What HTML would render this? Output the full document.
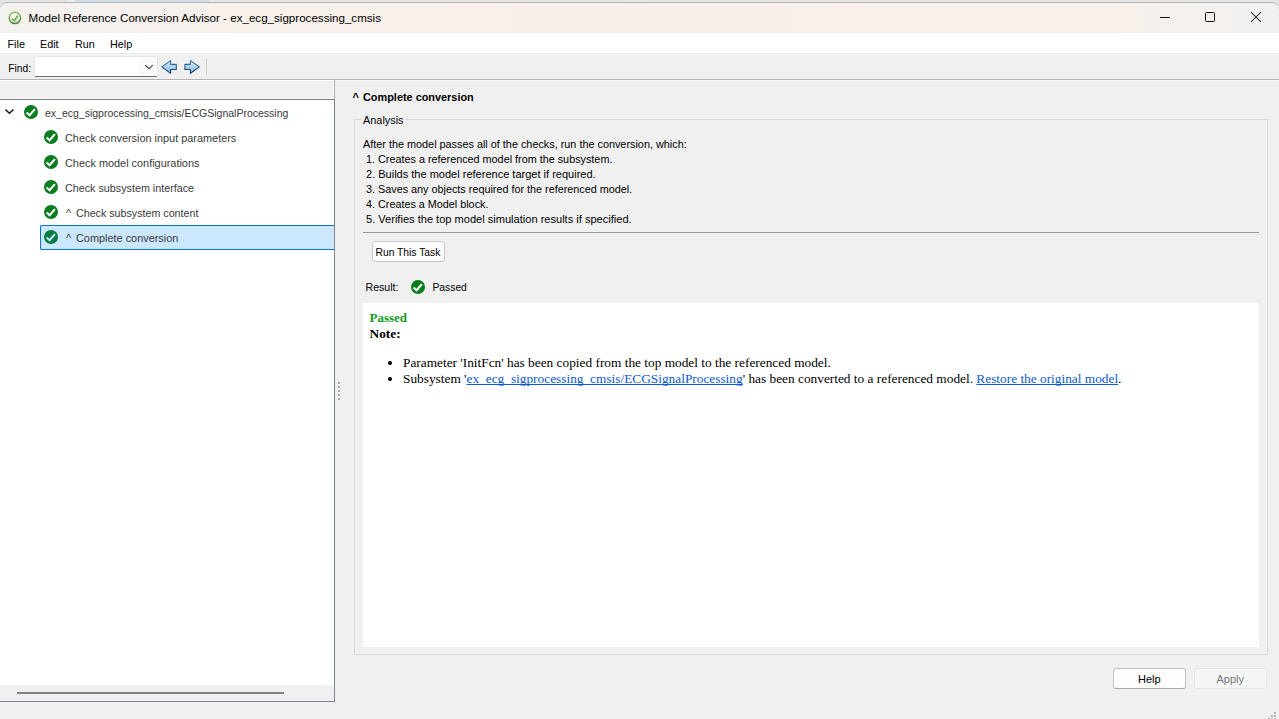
<!DOCTYPE html>
<html><head><meta charset="utf-8">
<style>
*{margin:0;padding:0;box-sizing:border-box}
html,body{width:1279px;height:719px;overflow:hidden;background:#f0f0f0;font-family:"Liberation Sans",sans-serif;color:#000}
.abs{position:absolute}
.t{position:absolute;white-space:nowrap;line-height:1}
#desk{left:0;top:0;width:1279px;height:6px;background:#e4e4e4}
#title{left:0;top:2px;width:1279px;height:31px;background:linear-gradient(90deg,#f4f2f0,#f7f0eb 18%,#f8efea 50%,#f7f0eb 88%,#f3f1ef 97%);border-top:1px solid #b4b4b4;border-radius:7px 7px 0 0}
#menu{left:0;top:33px;width:1279px;height:20px;background:#fff}
#menusep{left:0;top:53px;width:1279px;height:1px;background:#e6e6e6}
#menusep2{left:0;top:54px;width:1279px;height:1px;background:#f9f9f9}
#toolsep{left:0;top:79px;width:1279px;height:1px;background:#b2b2b2}
#tree{left:0;top:99px;width:335px;height:603px;background:#fff;border-top:1px solid #7c8491;border-right:1px solid #7c8491;border-bottom:1px solid #7c8491}
#hscroll{left:0;top:685px;width:334px;height:16px;background:#f0f0f0}
#hthumb{left:17px;top:692px;width:267px;height:2px;background:#808080}
.chk{position:absolute;width:14px;height:14px}
#sel{left:40px;top:225px;width:294px;height:25px;background:#cce8ff;border:1px solid #0a73d3;border-right:none;border-radius:2px 0 0 2px}
#grp{left:354px;top:119px;width:914px;height:536px;border:1px solid #d9d9d9}
#report{left:363px;top:303px;width:896px;height:344px;background:#fff}
.btn{position:absolute;background:#fdfdfd;border:1px solid #c8c8c8;border-radius:3px}
.serif{font-family:"Liberation Serif",serif}
a{color:#0c5bd0;text-decoration:underline;text-decoration-skip-ink:none}
.tr{font-size:10.9px;color:#3a3a3a}
.an{font-size:10.9px}
</style></head><body>
<div id="desk" class="abs"></div>
<div class="abs" style="left:67px;top:0;width:8px;height:3px;background:#ececec"></div><div class="abs" style="left:75px;top:0;width:134px;height:3px;background:#d0dce7"></div>
<div id="title" class="abs"></div>
<svg class="abs" style="left:8px;top:10.5px" width="14" height="14" viewBox="0 0 14 14">
<defs><radialGradient id="gi" cx="0.4" cy="0.35" r="0.75"><stop offset="0" stop-color="#ffffff"/><stop offset="0.6" stop-color="#e8e8ec"/><stop offset="1" stop-color="#b9b9c2"/></radialGradient>
<linearGradient id="gr" x1="0" y1="0" x2="0" y2="1"><stop offset="0" stop-color="#8cc152"/><stop offset="1" stop-color="#4f8236"/></linearGradient></defs>
<circle cx="6.9" cy="6.9" r="5.7" fill="url(#gi)" stroke="url(#gr)" stroke-width="1.4"/>
<path d="M4 7.6 L6.3 10 L9.8 4.5" fill="none" stroke="#74b347" stroke-width="1.7"/>
</svg>
<div class="t" style="left:28.5px;top:11.9px;font-size:11.6px">Model Reference Conversion Advisor - ex_ecg_sigprocessing_cmsis</div>
<div class="abs" style="left:1160px;top:17px;width:10px;height:1px;background:#111"></div>
<div class="abs" style="left:1205px;top:12px;width:10px;height:10px;border:1px solid #111;border-radius:1.5px"></div>
<svg class="abs" style="left:1250px;top:11px" width="12" height="12" viewBox="0 0 12 12"><path d="M1 1L11 11M11 1L1 11" stroke="#111" stroke-width="1.05"/></svg>

<div id="menu" class="abs"></div>
<div id="menusep" class="abs"></div>
<div id="menusep2" class="abs"></div>
<div class="t" style="left:7.5px;top:38.7px;font-size:10.8px">File</div>
<div class="t" style="left:40px;top:38.7px;font-size:10.8px">Edit</div>
<div class="t" style="left:75px;top:38.7px;font-size:10.8px">Run</div>
<div class="t" style="left:110px;top:38.7px;font-size:10.8px">Help</div>

<div id="toolsep" class="abs"></div>
<div class="t" style="left:8.3px;top:64.1px;font-size:10.3px">Find:</div>
<div class="abs" style="left:34px;top:56px;width:124px;height:21px;background:#fff;border:1px solid #e6e6e6;border-bottom:1px solid #707070;border-radius:3px 3px 2px 2px"></div>
<div class="abs" style="left:139px;top:57px;width:18px;height:19px;background:#f9f9f9"></div>
<svg class="abs" style="left:144px;top:64px" width="10" height="6" viewBox="0 0 10 6"><path d="M1.2 1.1L5 4.7L8.8 1.1" fill="none" stroke="#444" stroke-width="1.25"/></svg>
<svg width="0" height="0" style="position:absolute"><defs>
<linearGradient id="gs" x1="0" y1="0" x2="0" y2="1"><stop offset="0" stop-color="#3f74a6"/><stop offset="1" stop-color="#0c325c"/></linearGradient>
<linearGradient id="ga" x1="0" y1="0" x2="0" y2="1"><stop offset="0" stop-color="#e2f1fc"/><stop offset="0.45" stop-color="#b0d5ef"/><stop offset="1" stop-color="#86bbe2"/></linearGradient>
</defs></svg>
<svg class="abs" style="left:160px;top:59px" width="18" height="16" viewBox="0 0 18 16">
<path d="M1.8 7.9 L10.6 1.6 L10.6 5.35 L16.3 5.35 L16.3 10.4 L10.6 10.4 L10.6 14.3 Z" fill="url(#ga)" stroke="url(#gs)" stroke-width="1.05" stroke-linejoin="round"/>
</svg>
<svg class="abs" style="left:183px;top:59px" width="18" height="16" viewBox="0 0 18 16">
<path d="M16.4 7.9 L7.4 1.6 L7.4 5.35 L1.9 5.35 L1.9 10.4 L7.4 10.4 L7.4 14.3 Z" fill="url(#ga)" stroke="url(#gs)" stroke-width="1.05" stroke-linejoin="round"/>
</svg>
<div class="abs" style="left:206px;top:59px;width:1px;height:16px;background:#cfcfcf"></div>

<div class="abs" style="left:0;top:80px;width:1279px;height:1px;background:#f6f6f6"></div><div class="abs" style="left:0;top:80px;width:334px;height:1px;background:#fcfcfc"></div><div class="abs" style="left:333px;top:80px;width:1px;height:19px;background:#fafafa"></div><div class="abs" style="left:0;top:98px;width:334px;height:1px;background:#f7f7f7"></div><div class="abs" style="left:334px;top:80px;width:1px;height:19px;background:#acacac"></div>
<div id="tree" class="abs"></div>
<div id="hscroll" class="abs"></div>
<div id="hthumb" class="abs"></div>
<div id="sel" class="abs"></div>
<svg class="abs" style="left:4px;top:108px" width="11" height="7" viewBox="0 0 11 7"><path d="M1.4 1.5L5.45 5.2L9.4 1.5" fill="none" stroke="#111" stroke-width="1.5"/></svg>

<svg width="0" height="0" style="position:absolute"><defs>
<symbol id="ok" viewBox="0 0 14 14"><circle cx="7" cy="7" r="7" fill="#0a7d1f"/><path d="M2.6 7.5 L5.6 10.2 L10.9 4.1" fill="none" stroke="#fff" stroke-width="2.1"/></symbol>
<symbol id="oksel" viewBox="0 0 14 14"><circle cx="7" cy="7" r="7" fill="#087b3e"/><path d="M2.6 7.5 L5.6 10.2 L10.9 4.1" fill="none" stroke="#c8e4fa" stroke-width="2.1"/></symbol>
</defs></svg>
<svg class="chk" style="left:24px;top:105px"><use href="#ok"/></svg>
<svg class="chk" style="left:44px;top:130px"><use href="#ok"/></svg>
<svg class="chk" style="left:44px;top:155px"><use href="#ok"/></svg>
<svg class="chk" style="left:44px;top:180px"><use href="#ok"/></svg>
<svg class="chk" style="left:44px;top:205px"><use href="#ok"/></svg>
<svg class="chk" style="left:44px;top:230px"><use href="#oksel"/></svg>

<div class="t tr" style="left:45px;top:108.1px;font-size:10.5px">ex_ecg_sigprocessing_cmsis/ECGSignalProcessing</div>
<div class="t tr" style="left:65px;top:132.8px">Check conversion input parameters</div>
<div class="t tr" style="left:65px;top:157.8px">Check model configurations</div>
<div class="t tr" style="left:65px;top:182.8px;font-size:10.75px">Check subsystem interface</div>
<div class="t tr" style="left:66px;top:207.8px">^</div><div class="t tr" style="left:76px;top:207.9px;font-size:10.7px">Check subsystem content</div>
<div class="t tr" style="left:66px;top:232.8px">^</div><div class="t tr" style="left:76px;top:232.8px">Complete conversion</div>

<div class="abs" style="left:338px;top:382px;width:2px;height:2px;background:#a9a9a9"></div>
<div class="abs" style="left:338px;top:386px;width:2px;height:2px;background:#a9a9a9"></div>
<div class="abs" style="left:338px;top:390px;width:2px;height:2px;background:#a9a9a9"></div>
<div class="abs" style="left:338px;top:394px;width:2px;height:2px;background:#a9a9a9"></div>
<div class="abs" style="left:338px;top:398px;width:2px;height:2px;background:#a9a9a9"></div>

<div class="t" style="left:352.5px;top:91.5px;font-size:10.9px;font-weight:bold">^</div><div class="t" style="left:363px;top:91.5px;font-size:10.9px;font-weight:bold">Complete conversion</div>
<div id="grp" class="abs"></div>
<div class="abs" style="left:362px;top:113px;width:43px;height:12px;background:#f0f0f0"></div>
<div class="t an" style="left:363px;top:114.7px">Analysis</div>
<div class="t an" style="left:363px;top:138.5px;font-size:10.85px">After the model passes all of the checks, run the conversion, which:</div>
<div class="t an" style="left:366px;top:153.5px;font-size:10.82px">1. Creates a referenced model from the subsystem.</div>
<div class="t an" style="left:366px;top:168.5px;font-size:11.03px">2. Builds the model reference target if required.</div>
<div class="t an" style="left:366px;top:183.5px;font-size:10.82px">3. Saves any objects required for the referenced model.</div>
<div class="t an" style="left:366px;top:198.7px;font-size:10.81px">4. Creates a Model block.</div>
<div class="t an" style="left:366px;top:213.7px;font-size:11.07px">5. Verifies the top model simulation results if specified.</div>
<div class="abs" style="left:363px;top:232px;width:896px;height:1px;background:#999999"></div>
<div class="btn" style="left:372px;top:241px;width:73px;height:21px"></div>
<div class="t" style="left:375.5px;top:247.6px;font-size:10.3px">Run This Task</div>
<div class="t" style="left:365.5px;top:281.9px;font-size:10.6px">Result:</div>
<svg class="chk" style="left:411px;top:280px"><use href="#ok"/></svg>
<div class="t" style="left:432.5px;top:283px;font-size:10.3px">Passed</div>

<div id="report" class="abs"></div>
<div class="t serif" style="left:369.5px;top:311px;font-size:13px;font-weight:bold;color:#109c22">Passed</div>
<div class="t serif" style="left:369.5px;top:326.7px;font-size:13.33px;font-weight:bold">Note:</div>
<div class="abs" style="left:387.8px;top:360.8px;width:4.5px;height:4.5px;border-radius:50%;background:#000"></div>
<div class="abs" style="left:387.8px;top:376.8px;width:4.5px;height:4.5px;border-radius:50%;background:#000"></div>
<div class="t serif" style="left:403px;top:355.6px;font-size:13.33px">Parameter 'InitFcn' has been copied from the top model to the referenced model.</div>
<div class="t serif" style="left:403px;top:371.6px;font-size:13.33px">Subsystem '<a>ex_ecg_sigprocessing_cmsis/ECGSignalProcessing</a>' has been converted to a referenced model. <a>Restore the original model</a>.</div>

<div class="btn" style="left:1113px;top:668px;width:73px;height:21px;border-color:#c4c4c4;border-bottom-color:#a9a9a9"></div>
<div class="t" style="left:1138px;top:673.7px;font-size:11px">Help</div>
<div class="btn" style="left:1194px;top:668px;width:73px;height:21px;background:#f5f5f5;border-color:#e6e6e6"></div>
<div class="t" style="left:1216.5px;top:673.7px;font-size:11px;color:#7a7a7a">Apply</div>
<svg class="abs" style="left:1265px;top:710px" width="12" height="12" viewBox="0 0 12 12"><g fill="#b4b4b4"><rect x="9" y="2" width="2" height="2"/><rect x="6" y="5" width="2" height="2"/><rect x="9" y="5" width="2" height="2"/><rect x="3" y="8" width="2" height="2"/><rect x="6" y="8" width="2" height="2"/><rect x="9" y="8" width="2" height="2"/></g></svg>
</body></html>
